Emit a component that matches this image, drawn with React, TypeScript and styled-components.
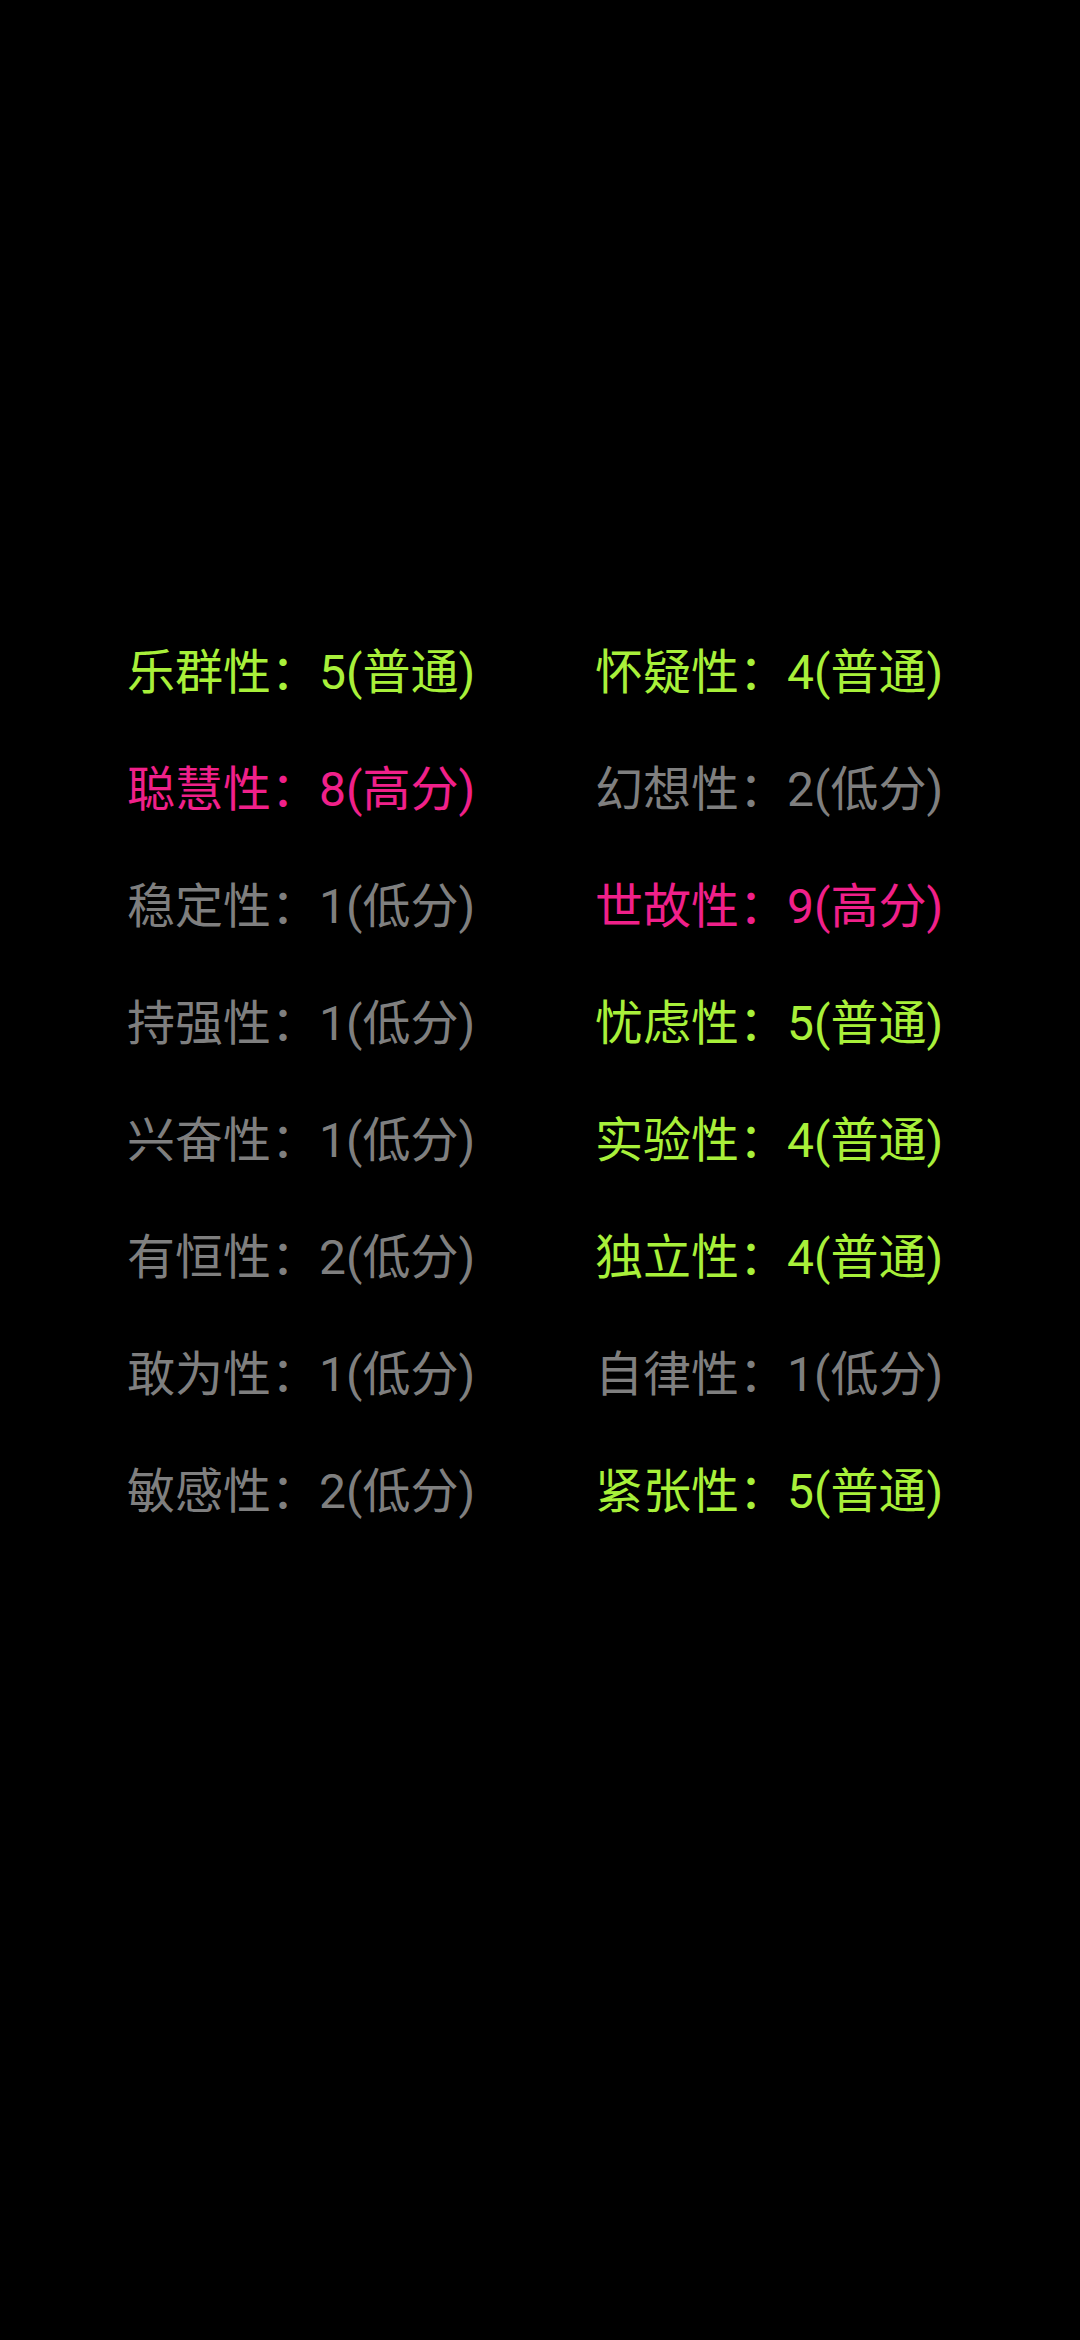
import React from "react";
import styled, { createGlobalStyle } from "styled-components";

const Global = createGlobalStyle`
  html, body { margin: 0; padding: 0; background: #000; }
  #root { min-height: 2340px; background: #000; }
`;

const Page = styled.div`
  width: 1080px;
  height: 2340px;
  background: #000;
  box-sizing: border-box;
  padding: 609px 0 0 127px;
`;

const Grid = styled.div`
  display: grid;
  grid-template-columns: 468px 468px;
  grid-auto-rows: 117px;
`;

type Level = "high" | "mid" | "low";

const colors: Record<Level, string> = {
  high: "#f0208a",
  mid: "#a8f03a",
  low: "#7f7f7f",
};

const Item = styled.div<{ $level: Level }>`
  display: flex;
  align-items: center;
  font-family: Roboto, "Noto Sans CJK SC", sans-serif;
  font-size: 48px;
  color: ${(p) => colors[p.$level]};
  white-space: nowrap;
`;

const data: [string, number][] = [
  ["乐群性", 5],
  ["怀疑性", 4],
  ["聪慧性", 8],
  ["幻想性", 2],
  ["稳定性", 1],
  ["世故性", 9],
  ["持强性", 1],
  ["忧虑性", 5],
  ["兴奋性", 1],
  ["实验性", 4],
  ["有恒性", 2],
  ["独立性", 4],
  ["敢为性", 1],
  ["自律性", 1],
  ["敏感性", 2],
  ["紧张性", 5],
];

const levelOf = (n: number): Level => (n >= 8 ? "high" : n <= 3 ? "low" : "mid");
const labelOf = (l: Level) => (l === "high" ? "高分" : l === "low" ? "低分" : "普通");

export default function App() {
  return (
    <>
      <Global />
      <Page>
        <Grid>
          {data.map(([name, score]) => {
            const lv = levelOf(score);
            return (
              <Item key={name} $level={lv}>
                {name}：{score}({labelOf(lv)})
              </Item>
            );
          })}
        </Grid>
      </Page>
    </>
  );
}
